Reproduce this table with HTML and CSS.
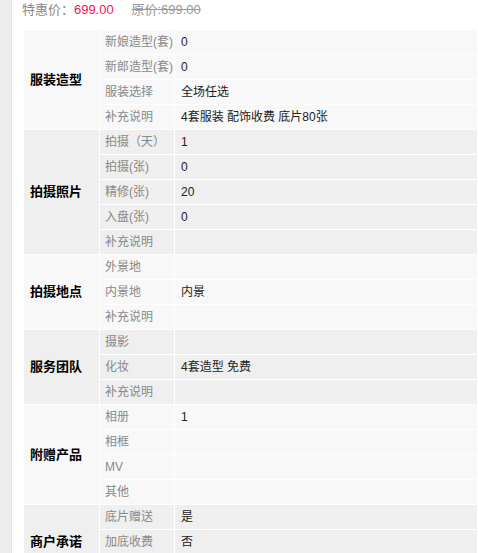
FILE: index.html
```html
<!DOCTYPE html>
<html lang="zh-CN">
<head>
    <meta charset="UTF-8">
    <meta name="viewport" content="width=device-width, initial-scale=1.0">
    <title>套系详情</title>
    <link rel="stylesheet" href="styles.css">
</head>
<body>
    <div class="page">
        <div class="side-strip"></div>
        <div class="main">
            <div class="price-line">
                <span class="price-label">特惠价：</span><span class="price-now">699.00</span>
                <span class="price-old">原价:699.00</span>
            </div>

            <table class="detail-table">
                <colgroup>
                    <col class="col-title">
                    <col class="col-label">
                    <col class="col-value">
                </colgroup>
                <tbody class="group light">
                    <tr><td class="title" rowspan="4">服装造型</td><td class="label">新娘造型(套)</td><td class="value">0</td></tr>
                    <tr><td class="label">新郎造型(套)</td><td class="value">0</td></tr>
                    <tr><td class="label">服装选择</td><td class="value">全场任选</td></tr>
                    <tr><td class="label">补充说明</td><td class="value">4套服装 配饰收费 底片80张</td></tr>
                </tbody>
                <tbody class="group dark">
                    <tr><td class="title" rowspan="5">拍摄照片</td><td class="label">拍摄（天）</td><td class="value">1</td></tr>
                    <tr><td class="label">拍摄(张)</td><td class="value">0</td></tr>
                    <tr><td class="label">精修(张)</td><td class="value">20</td></tr>
                    <tr><td class="label">入盘(张)</td><td class="value">0</td></tr>
                    <tr><td class="label">补充说明</td><td class="value"></td></tr>
                </tbody>
                <tbody class="group light">
                    <tr><td class="title" rowspan="3">拍摄地点</td><td class="label">外景地</td><td class="value"></td></tr>
                    <tr><td class="label">内景地</td><td class="value">内景</td></tr>
                    <tr><td class="label">补充说明</td><td class="value"></td></tr>
                </tbody>
                <tbody class="group dark">
                    <tr><td class="title" rowspan="3">服务团队</td><td class="label">摄影</td><td class="value"></td></tr>
                    <tr><td class="label">化妆</td><td class="value">4套造型 免费</td></tr>
                    <tr><td class="label">补充说明</td><td class="value"></td></tr>
                </tbody>
                <tbody class="group light">
                    <tr><td class="title" rowspan="4">附赠产品</td><td class="label">相册</td><td class="value">1</td></tr>
                    <tr><td class="label">相框</td><td class="value"></td></tr>
                    <tr><td class="label">MV</td><td class="value"></td></tr>
                    <tr><td class="label">其他</td><td class="value"></td></tr>
                </tbody>
                <tbody class="group dark">
                    <tr><td class="title" rowspan="3">商户承诺</td><td class="label">底片赠送</td><td class="value">是</td></tr>
                    <tr><td class="label">加底收费</td><td class="value">否</td></tr>
                    <tr><td class="label">补充说明</td><td class="value"></td></tr>
                </tbody>
            </table>
        </div>
    </div>
</body>
</html>
```

FILE: styles.css
```css
html, body {
    margin: 0;
    padding: 0;
    background: #fff;
    overflow: hidden;
}

body {
    font-family: "Liberation Sans", "Noto Sans CJK SC", sans-serif;
    font-size: 12px;
    color: #333;
}

.page {
    display: flex;
    min-height: 553px;
}

.side-strip {
    width: 11px;
    flex: none;
    background-color: #ececec;
    border-right: 1px solid #e2e2e2;
}

.main {
    flex: 1;
    padding-left: 12px;
}

.price-line {
    height: 20px;
    line-height: 20px;
    margin: 0 0 10px -2px;
    font-size: 13px;
    white-space: nowrap;
}

.price-label {
    color: #888;
}

.price-now {
    color: #f0145a;
}

.price-old {
    color: #999;
    margin-left: 14px;
    text-decoration: line-through;
}

.detail-table {
    width: 454px;
    table-layout: fixed;
    border-collapse: separate;
    border-spacing: 0;
}

.col-title {
    width: 76px;
}

.col-label {
    width: 75px;
}

.detail-table td {
    line-height: 24px;
    height: 24px;
    padding: 0 6px;
    border-right: 1px solid #fff;
    border-bottom: 1px solid #fff;
    white-space: nowrap;
    overflow: hidden;
}

.group.light td {
    background-color: #f8f8f8;
}

.group.dark td {
    background-color: #efefef;
}

.detail-table td.title {
    font-size: 13px;
    font-weight: bold;
    color: #000;
    vertical-align: middle;
}

.detail-table td.label {
    color: #888;
    padding-left: 5px;
}

.detail-table td.value {
    color: #222;
}
```
